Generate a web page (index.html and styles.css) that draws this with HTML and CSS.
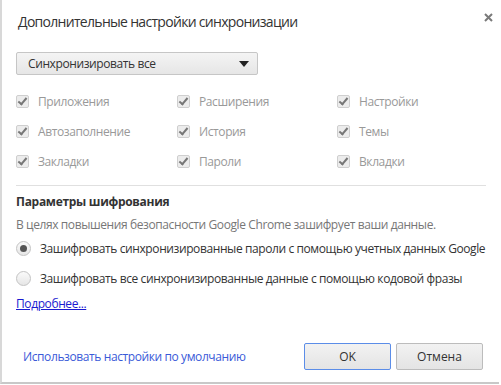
FILE: index.html
```html
<!DOCTYPE html>
<html>
<head>
    <title>Дополнительные настройки синхронизации</title>
    <link rel="stylesheet" href="styles.css">
</head>
<body>
    <div class="dialog">
        <div class="header">
            <h1>Дополнительные настройки синхронизации</h1>
            <span class="close">
                <svg width="9" height="9" viewBox="0 0 9 9"><path d="M1 1L8 8M8 1L1 8" stroke="#7a7a7a" stroke-width="2"/></svg>
            </span>
        </div>

        <div class="select">
            <span>Синхронизировать все</span>
            <svg width="10" height="6" viewBox="0 0 10 6"><path d="M0 0H10L5 6Z" fill="#222"/></svg>
        </div>

        <div class="types">
            <label class="check"><span class="box"></span>Приложения</label>
            <label class="check"><span class="box"></span>Расширения</label>
            <label class="check"><span class="box"></span>Настройки</label>
            <label class="check"><span class="box"></span>Автозаполнение</label>
            <label class="check"><span class="box"></span>История</label>
            <label class="check"><span class="box"></span>Темы</label>
            <label class="check"><span class="box"></span>Закладки</label>
            <label class="check"><span class="box"></span>Пароли</label>
            <label class="check"><span class="box"></span>Вкладки</label>
        </div>

        <div class="encryption">
            <h2>Параметры шифрования</h2>
            <div class="desc">В целях повышения безопасности Google Chrome зашифрует ваши данные.</div>
            <label class="radio first"><span class="dot checked"></span>Зашифровать синхронизированные пароли с помощью учетных данных Google</label>
            <label class="radio second"><span class="dot"></span>Зашифровать все синхронизированные данные с помощью кодовой фразы</label>
            <a class="more" href="#">Подробнее...</a>
        </div>

        <div class="footer">
            <a class="defaults" href="#">Использовать настройки по умолчанию</a>
            <div class="buttons">
                <button class="btn ok">OK</button>
                <button class="btn">Отмена</button>
            </div>
        </div>
    </div>
</body>
</html>
```

FILE: styles.css
```css
body {
    margin: 0;
    background-color: #fff;
    font-family: "Open Sans", "Noto Sans", sans-serif;
    font-size: 12px;
    letter-spacing: -0.4px;
}
.dialog {
    width: 499px;
    height: 384px;
    border-left: 2px solid #d8d8d8;
    border-bottom: 2px solid #c8c8c8;
    box-sizing: border-box;
    padding: 0 13px 0 14px;
    display: flex;
    flex-direction: column;
}
.header {
    display: flex;
    justify-content: space-between;
    padding-top: 12px;
    padding-left: 2px;
}
.header h1 {
    margin: 0;
    font-weight: normal;
    font-size: 14px;
    color: #333;
    letter-spacing: -0.7px;
}
.close {
    margin-top: -3px;
    margin-right: -7px;
}
.select {
    margin-top: 21px;
    width: 242px;
    height: 23px;
    box-sizing: border-box;
    border: 1px solid #c6c6c6;
    border-radius: 2px;
    background: linear-gradient(#f4f4f4, #e6e6e6);
    display: flex;
    align-items: center;
    justify-content: space-between;
    padding: 0 8px 0 11px;
    color: #333;
}
.types {
    display: grid;
    grid-template-columns: 161px 160px 140px;
    row-gap: 10px;
    margin-top: 16px;
}
.check {
    display: flex;
    align-items: center;
    color: #999;
    height: 20px;
}
.box {
    width: 11px;
    height: 11px;
    border: 1px solid #cfcfcf;
    border-radius: 2px;
    background: #ececec;
    margin-right: 9px;
    position: relative;
}
.box::after {
    content: "";
    position: absolute;
    left: 3px;
    top: 0px;
    width: 3px;
    height: 7px;
    border: solid #777;
    border-width: 0 2px 2px 0;
    transform: rotate(40deg);
}
.encryption {
    margin-top: 14px;
    border-top: 1px solid #e0e0e0;
    padding-top: 7px;
}
.encryption h2 {
    margin: 0;
    font-size: 12px;
    font-weight: bold;
    color: #333;
    letter-spacing: -0.3px;
}
.desc {
    color: #777;
    margin-top: 6px;
}
.radio {
    display: flex;
    align-items: center;
    color: #333;
    white-space: nowrap;
}
.radio.first {
    margin-top: 7px;
}
.radio.second {
    margin-top: 13px;
}
.dot {
    width: 13px;
    height: 13px;
    border: 1px solid #c3c3c3;
    border-radius: 50%;
    background: linear-gradient(#fafafa, #e6e6e6);
    margin-right: 9px;
    position: relative;
    flex: none;
}
.dot.checked::after {
    content: "";
    position: absolute;
    left: 3px;
    top: 3px;
    width: 7px;
    height: 7px;
    border-radius: 50%;
    background: #555;
}
.more {
    display: inline-block;
    margin-top: 8px;
    color: #1a1ad0;
}
.footer {
    display: flex;
    justify-content: space-between;
    align-items: center;
    margin-top: auto;
    margin-bottom: 12px;
    padding-left: 7px;
}
.defaults {
    color: #3a5ad8;
    text-decoration: none;
}
.buttons {
    display: flex;
    gap: 5px;
    margin-right: 3px;
}
.btn {
    width: 87px;
    height: 27px;
    border: 1px solid #bcbcbc;
    border-radius: 2px;
    background: linear-gradient(#f2f2f2, #e4e4e4);
    font-family: inherit;
    font-size: 12px;
    color: #333;
}
.btn.ok {
    border-color: #5b8de8;
}
```
